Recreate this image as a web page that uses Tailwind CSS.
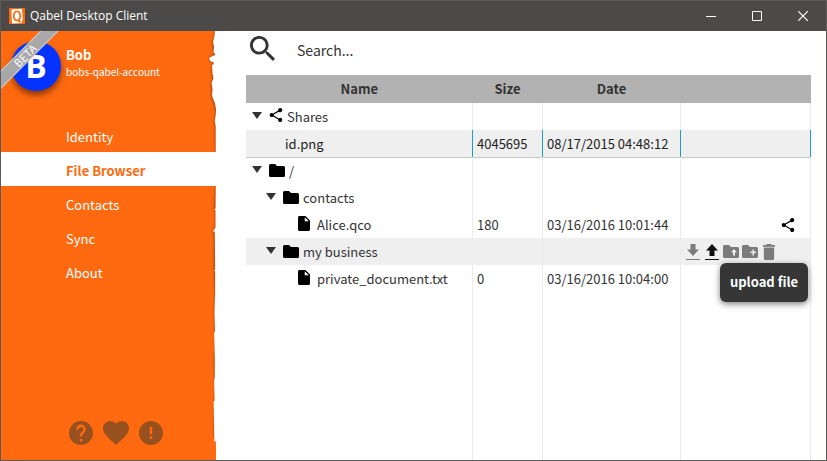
<!DOCTYPE html>
<html lang="en">
<head>
<meta charset="utf-8">
<title>Qabel Desktop Client</title>
<script src="https://cdn.jsdelivr.net/npm/@tailwindcss/browser@4"></script>
</head>
<body class="h-screen font-['Noto_Sans_CJK_SC','Noto_Sans',sans-serif] text-[13px] leading-5 text-[#333]">
<svg class="hidden">
  <symbol id="folder" viewBox="0 0 16 13"><path d="M1.500 0H6L8 2h6.500A1.500 1.500 0 0 1 16 3.500v8a1.500 1.500 0 0 1-1.500 1.500h-13A1.500 1.500 0 0 1 0 11.500v-10A1.500 1.500 0 0 1 1.500 0z"/></symbol>
  <symbol id="file" viewBox="4 2 16 20"><path d="M6 2c-1.100 0-2 .9-2 2v16c0 1.100.9 2 2 2h12c1.100 0 2-.9 2-2V8l-6-6H6zm7 7V3.500L18.500 9H13z"/></symbol>
  <symbol id="share" viewBox="2 2 20 20"><path d="M18 16.080c-.76 0-1.440.3-1.960.77L8.910 12.700c.05-.23.09-.46.09-.7s-.04-.47-.09-.7l7.050-4.110c.54.5 1.250.81 2.040.81 1.660 0 3-1.340 3-3s-1.340-3-3-3-3 1.340-3 3c0 .24.04.47.09.7L8.040 9.810C7.500 9.310 6.790 9 6 9c-1.660 0-3 1.340-3 3s1.340 3 3 3c.79 0 1.500-.31 2.040-.81l7.120 4.160c-.05.21-.08.43-.08.65 0 1.610 1.310 2.920 2.920 2.920s2.920-1.310 2.920-2.920-1.310-2.920-2.920-2.920z"/></symbol>
  <symbol id="tri" viewBox="0 0 10 7"><path d="M0 0h10L5 7z"/></symbol>
</svg>
<div class="flex h-full flex-col border border-[#5a5a58] bg-white">
  <header class="flex h-[30px] shrink-0 items-center bg-[#4b4a48] pl-2 text-white">
    <svg class="size-4" viewBox="0 0 16 16"><path fill="#ff6a10" d="M0 0h16v16H0z"/><path fill="#fff" d="M2.500 1.500l10.500-.7.700 10.200-1.200 4-9.500.5-.5-8z"/><path fill="none" stroke="#ff6a10" stroke-width="1.700" d="M8 3.500c-2.500 0-3.200 2-3.200 4.500S5.500 12.500 8 12.500s3.200-2 3.200-4.500S10.500 3.500 8 3.500zM8.500 11.500l3 2.500"/></svg>
    <h1 class="ml-[5px] font-['Open_Sans',sans-serif] text-xs">Qabel Desktop Client</h1>
    <div class="ml-auto flex h-full">
      <button aria-label="Minimize" class="grid w-[46px] place-items-center"><svg class="size-[10px]" viewBox="0 0 10 10"><path fill="#fff" d="M0 5h10v1H0z"/></svg></button>
      <button aria-label="Maximize" class="grid w-[46px] place-items-center"><svg class="size-[10px]" viewBox="0 0 10 10" fill="none" stroke="#fff"><path d="M.5.5h9v9h-9z"/></svg></button>
      <button aria-label="Close" class="grid w-[46px] place-items-center"><svg class="size-[10px]" viewBox="0 0 10 10" fill="none" stroke="#fff" stroke-width="1.200"><path d="M0 0l10 10M10 0L0 10"/></svg></button>
    </div>
  </header>
  <div class="flex min-h-0 flex-1">
    <aside class="relative flex w-[215px] shrink-0 flex-col bg-[#ff6a10] text-white">
      <svg class="absolute top-0 right-0 h-full w-3" viewBox="0 0 12 429" preserveAspectRatio="none">
        <defs><filter id="soft" x="-1" y="0" width="3" height="1"><feGaussianBlur stdDeviation="1.500 .8"/></filter></defs>
        <path filter="url(#soft)" fill="#8c3300" d="M11.500 0l-1 5-2 6 1 5-.5 5 2 3-3 1-3 2 1 3 3 1 1 2-2 2v8l1 5-2 4 1 7-.5 6 1 3 2 5 1 6v6l-1 5 1 6v62l-1 20h1v19l-3 4h2v40l1 22-1 20 1 20-1 30 1 20-1 20v34h5V0z"/>
        <path fill="#fff" d="M11 0l-.5 5-1.500 6 1 5-.5 5 2 3-3 1-3.500 2 1 3 3 1 1 1.500-2 2 .5 8 1 5-2 4 1 7-.5 6 1 3 2 5 1 6-.3 6-1 5 1 6v62l-.2 20-1 1 1 1v17l-2.700 4h2l.3 38-1 1 1 1v22l-.7 20 .7 18-1 1 .7 25v20l-.7 3 .5 20-1 1 .8 40h2V0z"/>
      </svg>
      <div class="flex h-[87px] items-start pt-[10px] pl-[10px]">
        <div class="grid size-[50px] place-items-center rounded-full bg-[#0433ff] font-['Open_Sans',sans-serif] text-[32px] font-bold leading-none shadow-[0_4px_6px_rgba(60,20,0,0.6)]">B</div>
        <div class="ml-[5px] pt-1">
          <p class="font-bold">Bob</p>
          <p class="text-[10px] leading-[14px]">bobs-qabel-account</p>
        </div>
      </div>
      <div class="absolute top-0 left-0 size-[60px] overflow-hidden">
        <div class="absolute top-[18px] -left-6 h-[13px] w-24 -rotate-45 border-y border-[#ccc] bg-[#a8a8a8] text-center text-[11px] leading-[11px] text-white">BETA</div>
      </div>
      <nav class="relative flex flex-col">
        <a href="#" class="pt-[9px] pb-[5px] pl-[65px]">Identity</a>
        <a href="#" aria-current="page" class="bg-white pt-[9px] pb-[5px] pl-[65px] font-bold text-[#ff6a10]">File Browser</a>
        <a href="#" class="pt-[9px] pb-[5px] pl-[65px]">Contacts</a>
        <a href="#" class="pt-[9px] pb-[5px] pl-[65px]">Sync</a>
        <a href="#" class="pt-[9px] pb-[5px] pl-[65px]">About</a>
      </nav>
      <div class="mt-auto mb-[15px] flex items-center gap-[10px] pl-[68px]">
        <button aria-label="Help"><svg class="block size-6" viewBox="2 2 20 20" fill="#99501f"><path d="M12 2C6.480 2 2 6.480 2 12s4.480 10 10 10 10-4.480 10-10S17.520 2 12 2zm1 17h-2v-2h2v2zm2.070-7.750l-.9.920C13.450 12.900 13 13.500 13 15h-2v-.5c0-1.100.45-2.100 1.170-2.830l1.240-1.260c.37-.36.59-.86.59-1.410 0-1.100-.9-2-2-2s-2 .9-2 2H8c0-2.210 1.790-4 4-4s4 1.790 4 4c0 .88-.36 1.680-.93 2.250z"/></svg></button>
        <button aria-label="Donate"><svg class="block h-6 w-[26px]" viewBox="2 3 20 18.350" fill="#99501f"><path d="M12 21.350l-1.450-1.320C5.400 15.360 2 12.280 2 8.500 2 5.420 4.420 3 7.500 3c1.740 0 3.410.81 4.500 2.090C13.090 3.810 14.760 3 16.500 3 19.580 3 22 5.420 22 8.500c0 3.780-3.400 6.860-8.550 11.540L12 21.350z"/></svg></button>
        <button aria-label="Report a problem"><svg class="block size-6" viewBox="2 2 20 20" fill="#99501f"><path d="M12 2C6.480 2 2 6.480 2 12s4.480 10 10 10 10-4.480 10-10S17.520 2 12 2zm1 15h-2v-2h2v2zm0-4h-2V7h2v6z"/></svg></button>
      </div>
    </aside>
    <main class="flex min-w-0 flex-1 flex-col pr-[15px] pl-[30px]">
      <div class="flex h-11 shrink-0 items-start pt-[5px] pl-1">
        <label for="search" aria-label="Search"><svg class="size-[25px]" viewBox="3 3 17.490 17.490" fill="#333"><path d="M15.500 14h-.79l-.28-.27C15.410 12.590 16 11.110 16 9.500 16 5.910 13.090 3 9.500 3S3 5.910 3 9.500 5.910 16 9.500 16c1.610 0 3.090-.59 4.230-1.570l.27.28v.79l5 4.990L20.490 19l-4.990-5zm-6 0C7.010 14 5 11.990 5 9.500S7.010 5 9.500 5 14 7.010 14 9.500 11.990 14 9.500 14z"/></svg></label>
        <input id="search" type="text" placeholder="Search..." class="ml-[22px] mt-1 h-5 flex-1 text-sm outline-none placeholder:text-[#333]">
      </div>
      <div class="min-h-0 flex-1">
      <table class="h-full w-full table-fixed border-collapse text-left">
        <colgroup><col><col class="w-[70px]"><col class="w-[138px]"><col class="w-[130px]"></colgroup>
        <thead><tr class="h-7 bg-[#b2b2b2] text-center font-bold"><th class="p-0">Name</th><th class="p-0">Size</th><th class="p-0">Date</th><th class="p-0" aria-label="Actions"></th></tr></thead>
        <tbody class="[&_td]:border-r [&_td]:border-[#ebebeb] [&_td]:p-0">
          <tr class="h-[27px]"><td><div class="flex items-center pl-[6px]"><svg class="mr-[7px] mb-[3px] h-[7px] w-[10px]" fill="#333"><use href="#tri"/></svg><svg class="mr-1 mb-[3px] size-[14px]"><use href="#share"/></svg><span>Shares</span></div></td><td></td><td></td><td></td></tr>
          <tr class="h-[27px] bg-[#efefef] text-[#222] shadow-[0_1px_#c8c8c8] [&>td]:border-[#1ba1c8]!"><td><div class="pl-[39px]">id.png</div></td><td><div class="pl-1">4045695</div></td><td><div class="pl-1">08/17/2015 04:48:12</div></td><td></td></tr>
          <tr class="h-[27px]"><td><div class="flex items-center pl-[6px]"><svg class="mr-[7px] mb-[3px] h-[7px] w-[10px]" fill="#333"><use href="#tri"/></svg><svg class="mr-1 mb-px h-[13px] w-4" fill="#000"><use href="#folder"/></svg><span>/</span></div></td><td></td><td></td><td></td></tr>
          <tr class="h-[27px]"><td><div class="flex items-center pl-[20px]"><svg class="mr-[7px] mb-[3px] h-[7px] w-[10px]" fill="#333"><use href="#tri"/></svg><svg class="mr-1 mb-px h-[13px] w-4" fill="#000"><use href="#folder"/></svg><span>contacts</span></div></td><td></td><td></td><td></td></tr>
          <tr class="h-[27px]"><td><div class="flex items-center pl-[52px]"><svg class="mr-[7px] mb-[3px] h-[15px] w-3" fill="#000"><use href="#file"/></svg><span>Alice.qco</span></div></td><td><div class="pl-1">180</div></td><td><div class="pl-1">03/16/2016 10:01:44</div></td><td><div class="flex justify-end pr-[15px]"><button aria-label="Share"><svg class="block size-[14px]" fill="#000"><use href="#share"/></svg></button></div></td></tr>
          <tr class="h-[27px] bg-[#efefef]"><td><div class="flex items-center pl-[20px]"><svg class="mr-[7px] mb-[3px] h-[7px] w-[10px]" fill="#333"><use href="#tri"/></svg><svg class="mr-1 mb-px h-[13px] w-4" fill="#000"><use href="#folder"/></svg><span>my business</span></div></td><td></td><td></td>
            <td><div class="flex items-center gap-[5px] pl-[5px] text-[#7b7b7b]">
              <button aria-label="Download"><svg class="block h-4 w-[14px]" viewBox="0 0 14 16" fill="currentColor"><path d="M4.500 0h5v5.500H13L7 12 1 5.500h3.500zM0 15h14v1H0z"/></svg></button>
              <div class="relative -mr-px flex">
                <button aria-label="Upload file" aria-describedby="tip"><svg class="block h-4 w-[14px]" viewBox="0 0 14 16" fill="#111"><path d="M7 0l6 6.500H9.500V12h-5V6.500H1zM0 15h14v1H0z"/></svg></button>
                <div id="tip" role="tooltip" class="absolute top-[19px] left-[15px] w-[88px] rounded-md bg-[#363636] pt-2 pb-[10px] text-center font-bold leading-[21px] text-white shadow-[0_2px_6px_rgba(0,0,0,0.5)]">upload file</div>
              </div>
              <button aria-label="Upload folder" class="-mr-[2px]"><svg class="block h-[13px] w-4" fill="currentColor" viewBox="0 0 16 13"><use href="#folder"/><path fill="#efefef" d="M11 4l3 3.200h-2V10.500h-2V7.200H8z"/></svg></button>
              <button aria-label="Create folder"><svg class="block h-[13px] w-4" fill="currentColor" viewBox="0 0 16 13"><use href="#folder"/><path fill="#efefef" d="M10.500 4.500h1.500v2h2V8h-2v2.500h-1.500V8h-2V6.500h2z"/></svg></button>
              <button aria-label="Delete"><svg class="block h-4 w-3" viewBox="5 3 14 18" preserveAspectRatio="none" fill="currentColor"><path d="M6 19c0 1.100.9 2 2 2h8c1.100 0 2-.9 2-2V7H6v12zM19 4h-3.500l-1-1h-5l-1 1H5v2h14V4z"/></svg></button>
            </div></td></tr>
          <tr class="h-[27px]"><td><div class="flex items-center pl-[52px]"><svg class="mr-[7px] mb-[3px] h-[15px] w-3" fill="#000"><use href="#file"/></svg><span>private_document.txt</span></div></td><td><div class="pl-1">0</div></td><td><div class="pl-1">03/16/2016 10:04:00</div></td><td></td></tr>
          <tr><td></td><td></td><td></td><td></td></tr>
        </tbody>
      </table>
      </div>
    </main>
  </div>
</div>
</body>
</html>
